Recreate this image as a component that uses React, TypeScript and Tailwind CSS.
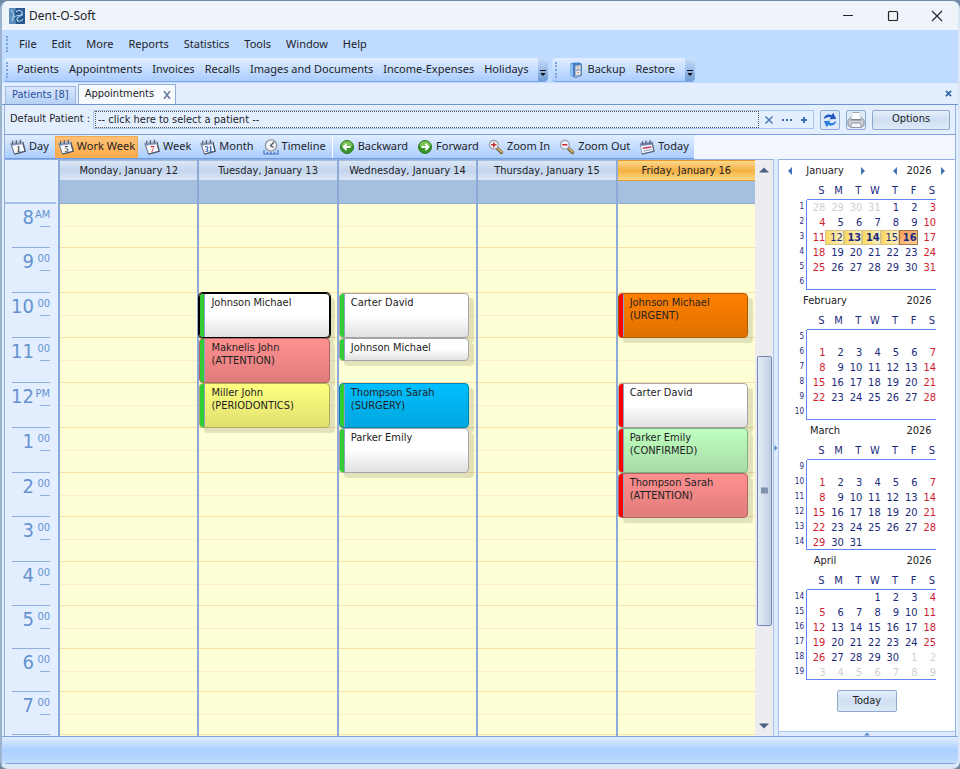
import React from 'react';
import clsx from 'clsx';

type Tone = 'white' | 'red' | 'yellow' | 'blue' | 'orange' | 'green';

interface Appointment {
  patient: string;
  label?: string;
  tone: Tone;
  half?: boolean;
  selected?: boolean;
}

interface Day {
  title: string;
  today?: boolean;
  bar: string;
  slots: Record<number, Appointment>;
}

const tones: Record<Tone, string> = {
  white: 'from-white via-white to-[#e0e0e0] border-[#a5a5a5]',
  red: 'from-[#ff9090] to-[#e07c7c] border-[#b06464]',
  yellow: 'from-[#ffff80] to-[#e0e070] border-[#aeae5a]',
  blue: 'from-[#00bfff] to-[#00a6de] border-[#0083b0]',
  orange: 'from-[#ff8000] to-[#e07000] border-[#b05a00]',
  green: 'from-[#c0ffc0] to-[#a6dca6] border-[#83b083]',
};

const hours = [
  { n: 8, suffix: 'AM', size: 'h-[44px]' },
  { n: 9, suffix: '00', size: 'h-[45px]' },
  { n: 10, suffix: '00', size: 'h-[45px]' },
  { n: 11, suffix: '00', size: 'h-[45px]' },
  { n: 12, suffix: 'PM', size: 'h-[45px]' },
  { n: 1, suffix: '00', size: 'h-[45px]' },
  { n: 2, suffix: '00', size: 'h-[44px]' },
  { n: 3, suffix: '00', size: 'h-[45px]' },
  { n: 4, suffix: '00', size: 'h-[44px]' },
  { n: 5, suffix: '00', size: 'h-[43px]' },
  { n: 6, suffix: '00', size: 'h-[43px]' },
  { n: 7, suffix: '00', size: 'h-[43px]' },
];

const days: Day[] = [
  { title: 'Monday, January 12', bar: '', slots: {} },
  {
    title: 'Tuesday, January 13',
    bar: 'bg-[#32cd32]',
    slots: {
      10: { patient: 'Johnson Michael', tone: 'white', selected: true },
      11: { patient: 'Maknelis John', label: '(ATTENTION)', tone: 'red' },
      12: { patient: 'Miller John', label: '(PERIODONTICS)', tone: 'yellow' },
    },
  },
  {
    title: 'Wednesday, January 14',
    bar: 'bg-[#32cd32]',
    slots: {
      10: { patient: 'Carter David', tone: 'white' },
      11: { patient: 'Johnson Michael', tone: 'white', half: true },
      12: { patient: 'Thompson Sarah', label: '(SURGERY)', tone: 'blue' },
      1: { patient: 'Parker Emily', tone: 'white' },
    },
  },
  { title: 'Thursday, January 15', bar: '', slots: {} },
  {
    title: 'Friday, January 16',
    today: true,
    bar: 'bg-[#ff0000]',
    slots: {
      10: { patient: 'Johnson Michael', label: '(URGENT)', tone: 'orange' },
      12: { patient: 'Carter David', tone: 'white' },
      1: { patient: 'Parker Emily', label: '(CONFIRMED)', tone: 'green' },
      2: { patient: 'Thompson Sarah', label: '(ATTENTION)', tone: 'red' },
    },
  },
];

// first = column of day 1 in the grid, counted from cell 0
const months = [
  { name: 'January', first: 4, count: 31, week: 1, before: 31, after: false },
  { name: 'February', first: 7, count: 28, week: 5, before: 0, after: false },
  { name: 'March', first: 7, count: 31, week: 9, before: 0, after: false },
  { name: 'April', first: 3, count: 30, week: 14, before: 0, after: true },
];

const Arrow = ({ dir, className }: { dir: 'left' | 'right' | 'up' | 'down'; className?: string }) => {
  const d = {
    left: 'M6 0v8L2 4z',
    right: 'M2 0v8l4-4z',
    up: 'M0 6h8L4 2z',
    down: 'M0 2h8L4 6z',
  }[dir];
  return (
    <svg viewBox="0 0 8 8" className={clsx('w-2 h-2 fill-current', className)}>
      <path d={d} />
    </svg>
  );
};

const CalendarIcon = ({ text, color = '#3b4252' }: { text: string; color?: string }) => (
  <svg viewBox="0 0 16 16" className="w-4 h-4 shrink-0">
    <path d="M.8 4.200 12.500 2.800l2.500 9.400L4.500 15z" fill="#f9fafd" stroke="#98a1b3" strokeWidth=".8" />
    <path d="m12.800 3 2.400 9.300L4.500 15.200" stroke="#4a5262" strokeWidth="1.300" fill="none" />
    <path d="M.8 4.300 12.600 3l.7 2.300L1.600 6.800z" fill="#8fa0c0" />
    <path d="M.8 4.500 4.300 15" stroke="#6f7a90" />
    <path d="M3 1.800v3.700M6.500 1.300V5M10.500.8v3.700" stroke="#3f4b62" strokeWidth="1.500" />
    <path d="M3.700 2v3M7.200 1.500v3M11.200 1v3" stroke="#e8edf6" strokeWidth=".6" />
    <text x="8.600" y="13.300" textAnchor="middle" fontSize="8" fontWeight="bold" fill={color} fontFamily="Liberation Serif, serif">{text}</text>
  </svg>
);

const TodayIcon = () => (
  <svg viewBox="0 0 16 16" className="w-4 h-4 shrink-0">
    <path d="M1 4.500 13 3l1.800 9.300L3 15z" fill="#f4f5fb" stroke="#8d94ad" strokeWidth=".8" />
    <path d="m13.200 3.200 1.800 9.200L3 15.200" stroke="#5d647e" strokeWidth="1.200" fill="none" />
    <path d="M1 4.600 13.200 3.100l.5 2.400L1.500 7z" fill="#7785b5" />
    <path d="M3.500 2v4M7 1.500v4M11 1v4" stroke="#56608a" strokeWidth="1.200" />
    <path d="m3.800 9.200 8.500-1.200" stroke="#c0436b" strokeWidth="1.500" />
    <path d="m4.300 12 8.500-1.400" stroke="#9aa2b8" />
  </svg>
);

const TimelineIcon = () => (
  <svg viewBox="0 0 16 16" className="w-4 h-4 shrink-0" fill="none">
    <path d="M1 11v4h14v-4M4.500 13v2M8 13v2M11.500 13v2" stroke="#3f72c4" strokeWidth="1.200" />
    <circle cx="8" cy="6.500" r="5.600" fill="#f3f4f6" stroke="#8f959f" strokeWidth="1.300" />
    <path d="M11 3 7.500 6.800l3.300 1.400" stroke="#4d535e" strokeWidth="1.200" />
  </svg>
);

const RoundArrowIcon = ({ dir }: { dir: 'left' | 'right' }) => (
  <svg viewBox="0 0 16 16" className="w-4 h-4 shrink-0">
    <circle cx="8" cy="8" r="6.500" fill="#38962a" stroke="#2b7a20" />
    <path d="M2.400 7a5.700 5.700 0 0 1 11.200 0Q8 9 2.400 7z" fill="#7cc458" />
    <path
      d={dir === 'left' ? 'M7.600 4.800 4.500 8l3.100 3.200M5 8h6.600' : 'm8.400 4.800 3.100 3.200-3.100 3.200M11 8H4.400'}
      stroke="#fff"
      strokeWidth="1.800"
      fill="none"
    />
  </svg>
);

const ZoomIcon = ({ plus }: { plus?: boolean }) => (
  <svg viewBox="0 0 16 16" className="w-4 h-4 shrink-0" fill="none">
    <path d="m9.500 9.500 4 4" stroke="#6d5f45" strokeWidth="3.200" strokeLinecap="round" />
    <path d="m10 9.500 3.700 3.600" stroke="#e3b95c" strokeWidth="1.500" strokeLinecap="round" />
    <circle cx="5.800" cy="5.800" r="4.400" fill="#eaf2fb" stroke="#979faa" strokeWidth="1.200" />
    <path d={plus ? 'M3.200 5.800h5.200M5.800 3.200v5.200' : 'M3.200 5.800h5.200'} stroke="#cf2b2b" strokeWidth="1.400" />
  </svg>
);

const BackupIcon = () => (
  <svg viewBox="0 0 16 16" className="w-4 h-4 shrink-0">
    <path d="M2.500 2.500Q2.500 1 4.500.7L11 .5q2 0 2.500 1.500v11.500L7.500 15.500l-5-1.500z" fill="#3b7fd4" />
    <path d="M2.500 2.500 5 1.500v13l-2.500-.8z" fill="#8cc0f5" />
    <path d="M6.500 3.200 13.500 2v11.500l-6 2-1-.5z" fill="#a9bdd8" stroke="#4b6fa3" strokeWidth=".7" />
    <path d="m7.800 4.300 4.700-.7v3.200l-4.700.8zM7.800 9l4.700-.8v4l-4.700 1.200z" fill="#f6f8fb" stroke="#7f92ad" strokeWidth=".5" />
    <path d="m9.300 5.600 1.800-.3M9.300 10.600l1.800-.3" stroke="#b9792c" />
  </svg>
);

const RefreshIcon = () => (
  <svg viewBox="0 0 16 16" className="w-4 h-4 shrink-0">
    <path d="M1.800 7.200C1.800 3.500 6 1.300 9.800 3L11.300.8l2.900 6.100-6.700.3 1.300-1.900C6.300 4.300 4 5.300 1.800 7.200z" fill="#2156c4" />
    <path d="M14.200 8.800c0 3.700-4.200 5.900-8 4.200l-1.500 2.200L1.800 9.100l6.700-.3-1.300 1.900c2.500 1 4.800 0 7-1.900z" fill="#2f7de0" />
  </svg>
);

const PrinterIcon = () => (
  <svg viewBox="0 0 18 18" className="w-[18px] h-[18px] shrink-0">
    <path d="M5.500 1.500h7l1.200 6.500H4.300z" fill="#fafbfd" stroke="#a3a9b3" />
    <path d="M3.500 6.500h11L17 9.500V14l-2 1.500H3L1 14V9.500z" fill="#ced1d7" stroke="#858a94" />
    <path d="M5 2h8l.8 6H4.200z" fill="#fafbfd" />
    <path d="M3.800 8h10.400l.5 1.600H3.300z" fill="#7c8189" />
    <path d="M4.500 12h9l.8 4.500H3.700z" fill="#f4f5f8" stroke="#9097a3" />
  </svg>
);

const Grip = () => <span className="w-[3px] h-4 border-l-2 border-dotted border-[#7da2d8] shrink-0" />;

const More = () => (
  <button type="button" aria-label="Toolbar options" className="w-[10px] self-stretch flex flex-col items-center justify-end pb-1 rounded-r bg-linear-to-b from-[#c9dffb] to-[#719bd6]">
    <svg viewBox="0 0 8 8" className="w-2 h-2"><path d="M1 1.500h6M2 4.500h4L4 6.500z" fill="#111" stroke="#111" strokeWidth="1" /></svg>
  </button>
);

function ToolButton({ icon, children, active }: { icon?: React.ReactNode; children: React.ReactNode; active?: boolean }) {
  return (
    <button
      type="button"
      className={clsx(
        'h-[22px] flex items-center gap-[3px] px-[3px] whitespace-nowrap',
        active && 'bg-linear-to-b from-[#ffc177] to-[#ffab45] ring-1 ring-inset ring-[#f5a94e]'
      )}
    >
      {icon}
      {children}
    </button>
  );
}

function AppointmentCard({ item, bar }: { item: Appointment; bar: string }) {
  return (
    <article
      className={clsx(
        'flex rounded-[4px] border bg-linear-to-b overflow-hidden mr-[7px] leading-[13px] text-[#222] shadow-[5px_5px_1px_rgba(120,120,90,0.22)]',
        item.half ? 'h-[23px]' : 'h-[45px]',
        tones[item.tone],
        item.selected && 'border-black ring-1 ring-black'
      )}
    >
      <div className={clsx('w-[5px] border-r border-[#8aa0c0]', bar)} />
      <div className="pl-[6px] pt-[2px] whitespace-nowrap">
        <p>{item.patient}</p>
        {item.label && <p>{item.label}</p>}
      </div>
    </article>
  );
}

function MiniMonth({ month, nav }: { month: (typeof months)[number]; nav?: boolean }) {
  const cell = (i: number) => {
    const n = i - month.first + 1;
    if (n > 0 && n <= month.count) return { n, muted: false };
    if (n <= 0 && month.before) return { n: month.before + n, muted: true };
    if (n > month.count && month.after) return { n: n - month.count, muted: true };
    return { n: 0, muted: true };
  };
  const arrow = (dir: 'left' | 'right', label: string, width: string) => (
    <span className={clsx('flex justify-center', width)}>
      {nav && <button type="button" aria-label={label}><Arrow dir={dir} className="text-[#3d71b8]" /></button>}
    </span>
  );

  return (
    <section className="leading-[14px]">
      <header className="h-[22px] flex items-center text-[#222]">
        {arrow('left', 'Previous month', 'w-[22px]')}
        <h3 className="w-12 flex justify-center">{month.name}</h3>
        {arrow('right', 'Next month', 'w-7')}
        <span className="w-2" />
        {arrow('left', 'Previous year', 'w-5')}
        <span className="w-7 text-center">2026</span>
        {arrow('right', 'Next year', 'w-5')}
      </header>
      <table className="table-fixed w-[157px] border-separate border-spacing-0 text-right text-[#1b2a7b]">
        <thead>
          <tr className="h-[18px]">
            <td className="w-7" />
            {['S', 'M', 'T', 'W', 'T', 'F', 'S'].map((d, i) => (
              <th key={i} scope="col" className="p-0 pr-px font-normal border-b border-[#6284ff]">{d}</th>
            ))}
          </tr>
        </thead>
        <tbody>
          {[0, 1, 2, 3, 4, 5].map((row) => (
            <tr key={row} className="h-[15px]">
              <th scope="row" className="p-0 pr-[2px] font-normal text-[8px] leading-[13px] align-top border-r border-[#6284ff]">
                {month.week + row}
              </th>
              {[0, 1, 2, 3, 4, 5, 6].map((col) => {
                const { n, muted } = cell(row * 7 + col);
                const work = nav && !muted && n >= 12 && n <= 16;
                return (
                  <td
                    key={col}
                    className={clsx(
                      'p-0 leading-[13px]',
                      row === 5 && 'border-b border-[#6284ff]',
                      muted ? 'text-[#cfcfcf]' : (col === 0 || col === 6) && 'text-[#d02030]',
                      work && n < 16 && 'bg-linear-to-r from-[#fdd95c] to-[#faf0c8] border border-[#d9c48a]',
                      work && n === 16 && 'bg-linear-to-br from-[#f79a50] to-[#fbd09a] border border-[#9a7a48]',
                      work && (n === 13 || n === 14 || n === 16) && 'font-bold'
                    )}
                  >
                    {n > 0 ? n : ''}
                  </td>
                );
              })}
            </tr>
          ))}
        </tbody>
      </table>
    </section>
  );
}

export default function App() {
  return (
    <div className="min-h-screen flex flex-col bg-[#6f8ba6] pt-px font-['Noto_Sans',sans-serif] text-[11px] text-[#1e1e28]">
      <div className="flex-1 flex flex-col rounded-lg overflow-hidden border-x-2 border-b-[5px] border-[#dbe7f6] border-l-[#9db4cf] bg-[#e3eeff]">
        <header className="h-[29px] flex items-center bg-[#eff4fb] pl-[7px] text-[12px]">
          <svg viewBox="0 0 16 16" className="w-4 h-4">
            <path d="M0 0h16v16H0z" fill="#28588f" />
            <path d="M0 0h7L5 6l2 10H0z" fill="#5c8fbe" />
            <path d="M7 4c3-3 7-1 6 2s-5 2-5 5 4 3 6 0M5 9c3-2 6-2 9-2M2 2l3 4-2 7" stroke="#a9cde8" strokeWidth="1.200" fill="none" />
          </svg>
          <h1 className="ml-1 mr-auto">Dent-O-Soft</h1>
          <button type="button" aria-label="Minimize" className="w-[45px] flex justify-center">
            <svg viewBox="0 0 12 12" className="w-3 h-3"><path d="M1 5.500h10" stroke="#222" /></svg>
          </button>
          <button type="button" aria-label="Maximize" className="w-[45px] flex justify-center">
            <svg viewBox="0 0 12 12" className="w-3 h-3"><rect x="1.500" y="1.500" width="9" height="9" rx="1" stroke="#222" strokeWidth="1.200" fill="none" /></svg>
          </button>
          <button type="button" aria-label="Close" className="w-[43px] flex justify-center">
            <svg viewBox="0 0 12 12" className="w-3 h-3"><path d="m1 1 10 10M11 1 1 11" stroke="#222" strokeWidth="1.100" /></svg>
          </button>
        </header>

        <nav className="h-7 flex items-center bg-[#bfdbff] pl-1 gap-[10px]">
          <Grip />
          <div className="flex gap-[15px]">
            {['File', 'Edit', 'More', 'Reports', 'Statistics', 'Tools', 'Window', 'Help'].map((t) => (
              <button type="button" key={t}>{t}</button>
            ))}
          </div>
        </nav>

        <div className="h-[25px] flex bg-[#bfdbff] pl-[2px] pb-px gap-1">
          <div className="flex items-center rounded bg-linear-to-b from-[#e1eeff] to-[#abcdff] border-b border-[#7ba6e0] pl-[2px]">
            <Grip />
            <div className="flex gap-[10px] pl-[8px] pr-[10px]">
              {['Patients', 'Appointments', 'Invoices', 'Recalls', 'Images and Documents', 'Income-Expenses', 'Holidays'].map((t) => (
                <button type="button" key={t} className="whitespace-nowrap">{t}</button>
              ))}
            </div>
            <More />
          </div>
          <div className="flex items-center rounded bg-linear-to-b from-[#e1eeff] to-[#abcdff] border-b border-[#7ba6e0] pl-[3px]">
            <Grip />
            <div className="flex gap-[10px] pl-[10px] pr-[10px]">
              <button type="button" className="flex items-center gap-[3px]"><BackupIcon />Backup</button>
              <button type="button">Restore</button>
            </div>
            <More />
          </div>
        </div>

        <div className="h-[22px] flex items-end pl-[3px] pr-[6px] border-b border-[#6f93cf] bg-[#e3eeff] font-['DejaVu_Sans_Condensed',sans-serif]">
          <button type="button" className="h-[18px] px-[6px] border border-b-0 border-[#9bb8e0] bg-linear-to-b from-[#d9e7fb] to-[#b6d1f5] text-[#2a4fa0]">Patients [8]</button>
          <div className="h-5 ml-[2px] flex items-center gap-[9px] pl-[6px] pr-1 border border-b-0 border-[#8fadd9] bg-[#f7faff]">
            <button type="button">Appointments</button>
            <button type="button" aria-label="Close tab">
              <svg viewBox="0 0 8 8" className="w-2 h-2"><path d="m1 0 6 8M7 0 1 8" stroke="#66789c" strokeWidth="1.500" /></svg>
            </button>
          </div>
          <button type="button" aria-label="Close page" className="ml-auto mb-[7px]">
            <svg viewBox="0 0 8 8" className="w-[7px] h-[7px]"><path d="m1 1 6 6M7 1 1 7" stroke="#3868ac" strokeWidth="2" /></svg>
          </button>
        </div>

        <div className="flex-1 flex flex-col mx-[2px] border-x border-[#8fb0e0] bg-[#f2f7ff] font-['DejaVu_Sans_Condensed',sans-serif]">
          <div className="h-[30px] flex items-center pl-[5px] pr-[5px] border-b border-[#7ba2de] bg-[#e3eeff]">
            <label htmlFor="patient" className="w-[83px] whitespace-nowrap">Default Patient :</label>
            <div className="flex-1 h-[19px] flex items-center border border-[#a9c6ef] pl-px text-[#3f6fb0]">
              <input
                id="patient"
                readOnly
                value="-- click here to select a patient --"
                className="flex-1 h-[17px] border border-dotted border-[#555] px-[2px] text-[#1e1e28] outline-none"
              />
              <button type="button" aria-label="Clear" className="w-[19px] flex justify-center">
                <svg viewBox="0 0 8 8" className="w-2 h-2"><path d="m.5.5 7 7M7.500.5l-7 7" stroke="currentColor" strokeWidth="1.300" /></svg>
              </button>
              <button type="button" aria-label="Browse" className="w-[17px] flex justify-center">
                <svg viewBox="0 0 10 2" className="w-[10px] h-[2px]"><path d="M0 0h2v2H0zM4 0h2v2H4zM8 0h2v2H8z" fill="currentColor" /></svg>
              </button>
              <button type="button" aria-label="Add" className="w-[18px] flex justify-center">
                <svg viewBox="0 0 6 6" className="w-[6px] h-[6px]"><path d="M0 3h6M3 0v6" stroke="currentColor" strokeWidth="2" /></svg>
              </button>
            </div>
            <button type="button" aria-label="Refresh" className="ml-[6px] w-5 h-5 flex items-center justify-center rounded-[2px] border border-[#8fadd4] bg-[#deeafa]"><RefreshIcon /></button>
            <button type="button" aria-label="Print" className="ml-[6px] w-5 h-5 flex items-center justify-center rounded-[2px] border border-[#8fadd4] bg-[#deeafa]"><PrinterIcon /></button>
            <button type="button" className="ml-[6px] w-[78px] h-5 rounded-[2px] border border-[#8fa9cc] bg-linear-to-b from-[#e6effb] via-[#cfdff2] to-[#dfeaf9]">Options</button>
          </div>

          <div className="h-6 flex font-['Noto_Sans',sans-serif]">
            <div className="flex items-center bg-linear-to-b from-[#e1eeff] to-[#abcdff] border-b border-[#6f9be0] px-[2px] gap-[3px]">
              <ToolButton icon={<CalendarIcon text="1" />}>Day</ToolButton>
              <ToolButton icon={<CalendarIcon text="5" />} active>Work Week</ToolButton>
              <ToolButton icon={<CalendarIcon text="7" color="#d02020" />}>Week</ToolButton>
              <ToolButton icon={<CalendarIcon text="31" color="#2a55b5" />}>Month</ToolButton>
              <ToolButton icon={<TimelineIcon />}>Timeline</ToolButton>
              <span className="w-px self-stretch bg-white" />
              <ToolButton icon={<RoundArrowIcon dir="left" />}>Backward</ToolButton>
              <ToolButton icon={<RoundArrowIcon dir="right" />}>Forward</ToolButton>
              <ToolButton icon={<ZoomIcon plus />}>Zoom In</ToolButton>
              <ToolButton icon={<ZoomIcon />}>Zoom Out</ToolButton>
              <ToolButton icon={<TodayIcon />}>Today</ToolButton>
            </div>
          </div>

          <main className="flex-1 flex">
            <div className="flex-1 flex border-t border-[#8fb0e0] bg-[#e3eeff]">
              <div className="w-[53px] flex flex-col pr-[2px] text-[#6593cf]">
                <div className="h-[44px] border-b-2 border-[#a3c0e8]" />
                {hours.map((h) => (
                  <div key={h.n} className={clsx('flex justify-end gap-px ml-[7px] mr-[6px] border-b border-[#8fb0e0]', h.size)}>
                    <span className="text-[20px] leading-[26px]">{h.n}</span>
                    <span className="h-[23px] leading-[22px]">
                      <span className="block w-[15px] text-right">{h.suffix}</span>
                      <span className="block ml-[5px] border-b border-[#8fb0e0]" />
                    </span>
                  </div>
                ))}
              </div>

              {days.map((day) => (
                <section key={day.title} className="flex-1 flex flex-col border-l-2 border-[#8cabd9] bg-[#ffffd5]">
                  <h2
                    className={clsx(
                      'h-[21px] text-center leading-[20px] border-y whitespace-nowrap',
                      day.today
                        ? 'bg-linear-to-b from-[#fbd98b] via-[#f5b040] to-[#fbda80] border-[#e8952a]'
                        : 'bg-linear-to-b from-[#dce7f5] via-[#c3d5ed] to-[#dbe6f5] border-[#a5bfe1]'
                    )}
                  >
                    {day.title}
                  </h2>
                  <div className="h-[23px] bg-[#a5bfe1] border-b border-[#8cabd9]" />
                  {hours.map((h) => {
                    const item = day.slots[h.n];
                    return (
                      <div key={h.n} className={clsx('border-b border-[#f8dfa5] bg-[linear-gradient(#fdeecb,#fdeecb)] bg-[length:100%_1px] bg-[position:0_22px] bg-no-repeat', h.size)}>
                        {item && <AppointmentCard item={item} bar={day.bar} />}
                      </div>
                    );
                  })}
                </section>
              ))}

              <div className="w-[18px] flex flex-col items-center bg-[#ececf0] text-[#4b5f82]">
                <button type="button" aria-label="Scroll up" className="h-5 flex items-center"><Arrow dir="up" className="w-[10px] h-[10px]" /></button>
                <div className="flex-[176]" />
                <div className="flex-[269] w-[15px] rounded-[2px] border border-[#7389b0] bg-linear-to-r from-[#e6ecf6] to-[#c0cfe6] flex items-center justify-center">
                  <span className="w-[7px] h-[7px] bg-[#8192ae] border-y border-[#a7b4ca]" />
                </div>
                <div className="flex-[90]" />
                <button type="button" aria-label="Scroll down" className="h-5 flex items-center"><Arrow dir="down" className="w-[10px] h-[10px]" /></button>
              </div>
            </div>

            <div className="w-[6px] flex items-center justify-center bg-[#dfeafb] border-x border-[#a5c4f2]">
              <Arrow dir="right" className="text-[#5b86c4] w-[6px] shrink-0" />
            </div>

            <aside className="w-[176px] flex flex-col bg-white border-t border-[#8fb0e0]">
              {months.map((m, i) => (
                <MiniMonth key={m.name} month={m} nav={i === 0} />
              ))}
              <button type="button" className="self-center mt-[10px] w-[60px] h-[22px] rounded-[2px] border border-[#8fa9cc] bg-linear-to-b from-[#e6effb] via-[#cfdff2] to-[#dfeaf9]">Today</button>
              <div className="mt-auto h-[5px] flex items-center justify-center bg-[#dfeafb] border-t border-[#a5c4f2]">
                <Arrow dir="up" className="text-[#5b86c4] w-[6px] h-[6px]" />
              </div>
            </aside>
          </main>
        </div>

        <footer className="h-7 border-y border-[#7ba2de] bg-linear-to-b from-[#e1eeff] via-[#abcfff] to-[#bfdbff]" />
      </div>
    </div>
  );
}
